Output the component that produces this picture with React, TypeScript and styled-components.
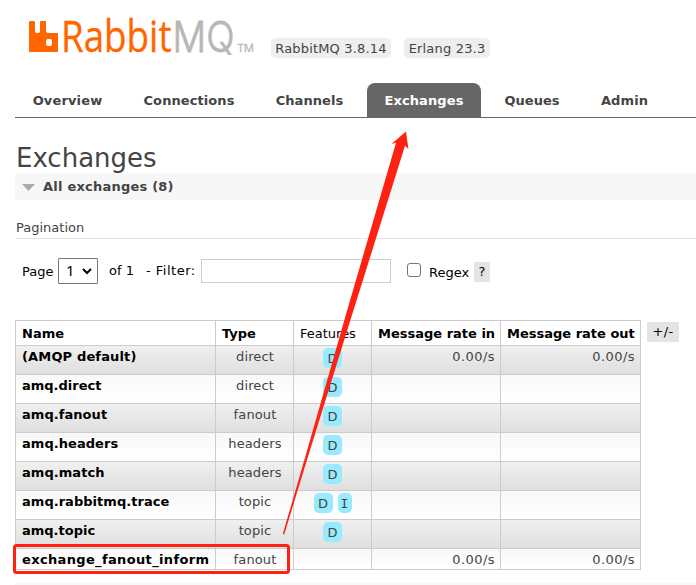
import React from "react";
import styled, { createGlobalStyle, css } from "styled-components";

const GlobalStyle = createGlobalStyle`
  *, *::before, *::after { box-sizing: border-box; }
  html, body { margin: 0; background: #fff; overflow: hidden; }
  body { font: 13px/16px Verdana, "DejaVu Sans", sans-serif; color: #444; }
`;

const Page = styled.div`
  position: relative;
  width: 696px;
  height: 585px;
  padding-left: 15px;
  overflow: hidden;
  display: flex;
  flex-direction: column;
  white-space: nowrap;
`;

const Text = styled.span<{ $spacing?: number }>`
  letter-spacing: ${(p) => p.$spacing ?? 0}px;
`;

const Header = styled.header`
  display: flex;
  height: 83px;
  flex: none;
`;

const Logo = styled.svg`
  width: 256px;
  height: 60px;
  flex: none;
`;

const Version = styled.span<{ $width: number }>`
  width: ${(p) => p.$width}px;
  height: 20px;
  margin: 38px 13px 0 0;
  padding-top: 3px;
  border-radius: 5px;
  background: #eee;
  text-align: center;
  line-height: 15px;
  letter-spacing: 0.18px;
`;

const Tabs = styled.nav`
  display: flex;
  height: 35px;
  flex: none;
  border-bottom: 1px solid #666;
`;

const Tab = styled.a<{ $width: number; $active?: boolean }>`
  width: ${(p) => p.$width}px;
  height: 34px;
  padding-top: 10px;
  text-align: center;
  font-weight: bold;
  border-radius: 8px 8px 0 0;
  ${(p) => p.$active && css`margin-left: 6px; background: #666; color: #fff;`}
`;

const Title = styled.h1`
  margin: 22px 0 0;
  padding-left: 1px;
  height: 33px;
  flex: none;
  font-size: 26px;
  line-height: 36px;
  font-weight: normal;
`;

const Section = styled.h2`
  display: flex;
  align-items: center;
  height: 27px;
  flex: none;
  margin: 0;
  padding-left: 7px;
  gap: 8px;
  background: #f7f7f7;
  font-size: 13px;
`;

const SubTitle = styled.h3`
  height: 39px;
  flex: none;
  margin: 0;
  padding: 20px 0 0 1px;
  border-bottom: 1px solid #e4e4e4;
  font-size: 13px;
  font-weight: normal;
`;

const Filters = styled.div`
  display: flex;
  align-items: flex-start;
  height: 81px;
  flex: none;
  padding: 19px 0 0 7px;
  color: #000;
`;

const Label = styled.label<{ $width: number; $top: number }>`
  width: ${(p) => p.$width}px;
  padding-top: ${(p) => p.$top}px;
`;

const PageSelect = styled.div`
  display: flex;
  align-items: center;
  justify-content: space-between;
  width: 40px;
  height: 26px;
  margin-right: 11px;
  padding: 0 5px 0 7px;
  border: 1px solid #767676;
  border-radius: 1px;
  font: 15px/22px "Noto Sans", sans-serif;

  svg { margin-top: 1px; }
  span { padding-bottom: 2px; }
`;

const FilterInput = styled.input`
  width: 190px;
  height: 24px;
  margin: 1px 16px 0 0;
  border: 1px solid #ccc;
  outline: none;
`;

const CheckBox = styled.span`
  width: 14px;
  height: 14px;
  margin: 5px 8px 0 0;
  border: 1px solid #767676;
  border-radius: 3px;
`;

const GrayButton = styled.span<{ $width: number; $top: number }>`
  width: ${(p) => p.$width}px;
  height: 20px;
  margin-top: ${(p) => p.$top}px;
  background: #e4e4e4;
  color: #000;
  text-align: center;
  line-height: 20px;
`;

const Listing = styled.div`
  display: flex;
  align-items: flex-start;
  flex: none;
  gap: 6px;
`;

const Table = styled.div`
  width: 626px;
  border: 1px solid #ccc;
  border-bottom: 0;
`;

const Row = styled.div<{ $height: number; $shade: "head" | "dark" | "light" }>`
  display: grid;
  grid-template-columns: 200px 78px 78px 129px 139px;
  height: ${(p) => p.$height}px;
  border-bottom: 1px solid #ccc;
  background: ${(p) =>
    p.$shade === "head" ? "#fff"
      : p.$shade === "dark" ? "linear-gradient(#f0f0f0, #dfdfdf)"
      : "linear-gradient(#f8f8f8, #fff)"};
  ${(p) => p.$shade === "head" && css`color: #000; > div { padding-top: 5px; }`}
`;

const Cell = styled.div<{ $align?: string; $bold?: boolean }>`
  padding: 3px 5px 0 6px;
  text-align: ${(p) => p.$align ?? "left"};
  border-right: 1px solid #ccc;
  &:last-child { border-right: 0; }
  ${(p) => p.$bold && css`font-weight: bold; color: #000;`}
`;

const Badges = styled(Cell)`
  display: flex;
  justify-content: center;
  gap: 5px;
  padding: 2px 0 0;
`;

const Badge = styled.span<{ $narrow?: boolean }>`
  width: ${(p) => (p.$narrow ? 14 : 19)}px;
  height: 20px;
  border-radius: 5px;
  background: #98ebff;
  text-align: center;
  line-height: 21px;
  ${(p) => p.$narrow && css`font-family: "DejaVu Sans Mono", monospace;`}
`;

const NextSection = styled.div`
  height: 14px;
  flex: none;
  margin-top: 13px;
  background: #f8f8f8;
`;

const Annotation = styled.svg`
  position: absolute;
  inset: 0;
  pointer-events: none;
`;

const tabs = [
  { name: "Overview", width: 105, spacing: 0.15 },
  { name: "Connections", width: 138, spacing: 0.08 },
  { name: "Channels", width: 103, spacing: 0.08 },
  { name: "Exchanges", width: 114, spacing: 0.1 },
  { name: "Queues", width: 102, spacing: 0 },
  { name: "Admin", width: 83, spacing: 0.1 },
];

const exchanges = [
  { name: "(AMQP default)", type: "direct", features: ["D"], rate: "0.00/s", spacing: 0.15 },
  { name: "amq.direct", type: "direct", features: ["D"], rate: "", spacing: 0 },
  { name: "amq.fanout", type: "fanout", features: ["D"], rate: "", spacing: 0.05 },
  { name: "amq.headers", type: "headers", features: ["D"], rate: "", spacing: 0.05 },
  { name: "amq.match", type: "headers", features: ["D"], rate: "", spacing: 0.05 },
  { name: "amq.rabbitmq.trace", type: "topic", features: ["D", "I"], rate: "", spacing: 0.03 },
  { name: "amq.topic", type: "topic", features: ["D"], rate: "", spacing: 0 },
  { name: "exchange_fanout_inform", type: "fanout", features: [], rate: "0.00/s", spacing: 0.35 },
];

function RabbitLogo() {
  return (
    <Logo viewBox="15 0 256 60" fontFamily="Open Sans, sans-serif">
      <path
        fill="#f60"
        fillRule="evenodd"
        d="M30 21h4q1 0 1 1v9q0 2 2 2h1q2 0 2-2v-9q0-1 1-1h4q1 0 1 1v9q0 2 2 2h9q1 0 1 1v17q0 1-1 1H30q-1 0-1-1V22q0-1 1-1ZM48 39q-2 0-2 2v3q0 2 2 2h2q2 0 2-2v-3q0-2-2-2Z"
      />
      <text x="61" y="52" fontSize="43" fill="#f60" stroke="#f60" strokeWidth=".3" textLength="110.5" lengthAdjust="spacingAndGlyphs">Rabbit</text>
      <text x="172.5" y="52" fontSize="42.5" fontFamily="Inter, sans-serif" fontWeight="300" fill="#b7b7b7" stroke="#b7b7b7" strokeWidth=".8" textLength="62" lengthAdjust="spacingAndGlyphs">MQ</text>
      <text x="237.5" y="52" fontSize="11" fill="#b7b7b7" stroke="#b7b7b7" strokeWidth=".3" textLength="16.5" lengthAdjust="spacingAndGlyphs">TM</text>
    </Logo>
  );
}

export default function App() {
  return (
    <>
      <GlobalStyle />
      <Page>
        <Header>
          <RabbitLogo />
          <Version $width={120}>RabbitMQ 3.8.14</Version>
          <Version $width={86}>Erlang 23.3</Version>
        </Header>
        <Tabs>
          {tabs.map((t) => (
            <Tab key={t.name} $width={t.width} $active={t.name === "Exchanges"}>
              <Text $spacing={t.spacing}>{t.name}</Text>
            </Tab>
          ))}
        </Tabs>
        <Title>Exchanges</Title>
        <Section>
          <svg width="13" height="8" viewBox="0 0 13 8"><path d="M0 1h13L6.5 8Z" fill="#aaa" /></svg>
          <Text $spacing={0.22}>All exchanges (8)</Text>
        </Section>
        <SubTitle>Pagination</SubTitle>
        <Filters>
          <Label $width={36} $top={6}>Page</Label>
          <PageSelect>
            <span>1</span>
            <svg width="10" height="7" viewBox="0 0 10 7"><path d="m1 1 4 4 4-4" fill="none" stroke="#000" strokeWidth="2" /></svg>
          </PageSelect>
          <Label $width={37} $top={5}>of 1</Label>
          <Label $width={55} $top={5}><Text $spacing={0.5}>- Filter:</Text></Label>
          <FilterInput aria-label="Filter" />
          <CheckBox />
          <Label $width={45} $top={7}>Regex</Label>
          <GrayButton $width={16} $top={4}>?</GrayButton>
        </Filters>
        <Listing>
          <Table>
            <Row $height={25} $shade="head">
              <Cell $bold>Name</Cell>
              <Cell $bold>Type</Cell>
              <Cell>Features</Cell>
              <Cell $bold>Message rate in</Cell>
              <Cell $bold>Message rate out</Cell>
            </Row>
            {exchanges.map((e, i) => (
              <Row key={e.name} $height={i === 7 ? 21 : 29} $shade={i % 2 ? "light" : "dark"}>
                <Cell $bold><Text $spacing={e.spacing}>{e.name}</Text></Cell>
                <Cell $align="center"><Text $spacing={0.12}>{e.type}</Text></Cell>
                <Badges>
                  {e.features.map((f) => <Badge key={f} $narrow={f === "I"}>{f}</Badge>)}
                </Badges>
                <Cell $align="right"><Text $spacing={0.45}>{e.rate}</Text></Cell>
                <Cell $align="right"><Text $spacing={0.45}>{e.rate}</Text></Cell>
              </Row>
            ))}
          </Table>
          <GrayButton $width={32} $top={2}><Text $spacing={0.4}>+/-</Text></GrayButton>
        </Listing>
        <NextSection />
        <Annotation width="696" height="585">
          <path d="M406 131.5 391.5 144l4.5-1.3L345.8 315 305.8 455 282.8 534l1.4.4L308.5 455 352 315 405 145.7l3.4 3.2Z" fill="#ff2112" />
          <rect x="14.5" y="545.5" width="274" height="27" rx="2" fill="none" stroke="#ff2112" strokeWidth="3" />
        </Annotation>
      </Page>
    </>
  );
}
